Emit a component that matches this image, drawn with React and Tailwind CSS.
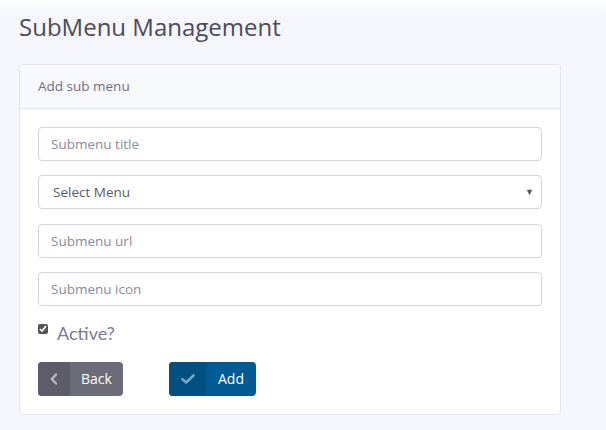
import React from "react";

const Field = ({ placeholder }) => (
  <input
    type="text"
    placeholder={placeholder}
    className="block w-full h-[34px] rounded border border-[#d4d2e3] bg-white px-3 text-[13.5px] text-[#5a5a6a] placeholder:text-[#8b8a9b] outline-none"
  />
);

const App = () => {
  return (
    <div
      className="w-[606px] h-[430px] overflow-hidden bg-[#f6f7fc] relative"
      style={{ fontFamily: "'Open Sans', 'Noto Sans', sans-serif" }}
    >
      {/* faint header shadow at the top */}
      <div className="absolute top-0 left-0 right-0 h-3 bg-gradient-to-b from-white to-transparent" />

      <div className="relative px-[19px] pt-[11px]">
        <h1 className="text-[24px] leading-[32px] text-[#4c4b57] font-normal">
          SubMenu Management
        </h1>

        {/* Card */}
        <div className="mt-[21px] w-[542px] h-[351px] rounded border border-[#e3e4ee] bg-white overflow-hidden">
          <div className="h-[44px] flex items-center px-[18px] bg-[#f8f9fc] border-b border-[#e3e4ee] text-[13.5px] text-[#6e6d7c]">
            Add sub menu
          </div>

          <div className="px-[18px] pt-[18px] flex flex-col">
            <div className="flex flex-col gap-[14.3px]">
              <Field placeholder="Submenu title" />
              <div className="relative">
                <select className="block w-full h-[34px] appearance-none rounded border border-[#d4d2e3] bg-white pl-[14px] text-[13.5px] text-[#5a5a6a] outline-none">
                  <option>Select Menu</option>
                </select>
                <span className="absolute right-[8px] top-1/2 -translate-y-1/2 text-[9px] text-[#555]">▼</span>
              </div>
              <Field placeholder="Submenu url" />
              <Field placeholder="Submenu icon" />
            </div>

            <label className="mt-[15px] flex items-center gap-[9px]" style={{ fontFamily: "Lato, sans-serif" }}>
              <input type="checkbox" defaultChecked className="w-[10px] h-[10px] m-0 accent-[#555] -mt-[7px]" />
              <span className="text-[18px] leading-[24px] text-[#7b7a8c]">Active?</span>
            </label>

            <div className="mt-[17px] flex gap-[46px]">
              <button className="flex h-[34px] w-[85px] rounded overflow-hidden bg-[#6c6b78] text-white text-[14px]">
                <span className="w-[32px] h-full flex items-center justify-center bg-[#5d5c68]">
                  <svg width="8" height="12" viewBox="0 0 8 12" fill="none" stroke="#b6b5c0" strokeWidth="2.4" strokeLinecap="round" strokeLinejoin="round">
                    <path d="M6 1.5L1.8 6 6 10.5" />
                  </svg>
                </span>
                <span className="flex-1 flex items-center justify-center">Back</span>
              </button>
              <button className="flex h-[34px] w-[87px] rounded overflow-hidden bg-[#005a94] text-white text-[14px]">
                <span className="w-[37px] h-full flex items-center justify-center bg-[#004f81]">
                  <svg width="14" height="10" viewBox="0 0 14 10" fill="none" stroke="#7ea3c0" strokeWidth="2.6" strokeLinecap="round" strokeLinejoin="round">
                    <path d="M1.5 5.2l3.6 3.3L12.5 1.5" />
                  </svg>
                </span>
                <span className="flex-1 flex items-center justify-center">Add</span>
              </button>
            </div>
          </div>
        </div>
      </div>
    </div>
  );
};

export default App;
